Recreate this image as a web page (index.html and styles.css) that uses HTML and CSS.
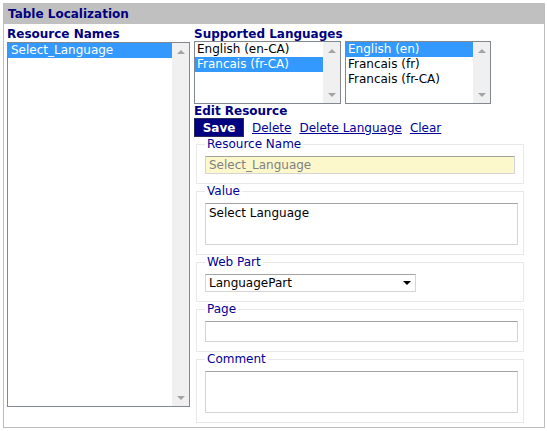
FILE: index.html
```html
<!DOCTYPE html>
<html lang="en">
<head>
  <meta charset="UTF-8" />
  <title>Table Localization</title>
  <link rel="stylesheet" href="styles.css">
</head>
<body>
  <div class="panel">
    <div class="panel-head">Table Localization</div>
    <div class="panel-body">

      <div class="names-col">
        <div class="label names-label">Resource Names</div>
        <div class="listbox names-list">
          <div class="items">
            <div class="item sel">Select_Language</div>
          </div>
          <div class="scroll"><span class="arrow up"></span><span class="arrow down"></span></div>
        </div>
      </div>

      <div class="edit-col">
        <div class="label">Supported Languages</div>
        <div class="lang-lists">
          <div class="listbox lang-list">
            <div class="items">
              <div class="item">English (en-CA)</div>
              <div class="item sel">Francais (fr-CA)</div>
            </div>
            <div class="scroll"><span class="arrow up"></span><span class="arrow down"></span></div>
          </div>
          <div class="listbox lang-list">
            <div class="items">
              <div class="item sel">English (en)</div>
              <div class="item">Francais (fr)</div>
              <div class="item">Francais (fr-CA)</div>
            </div>
            <div class="scroll"><span class="arrow up"></span><span class="arrow down"></span></div>
          </div>
        </div>

        <div class="label">Edit Resource</div>
        <div class="actions">
          <button class="btn-save">Save</button>
          <a href="#">Delete</a>
          <a href="#">Delete Language</a>
          <a href="#">Clear</a>
        </div>

        <fieldset>
          <legend>Resource Name</legend>
          <input class="field field-name" type="text" value="Select_Language" readonly>
        </fieldset>
        <fieldset>
          <legend>Value</legend>
          <textarea class="field field-area">Select Language</textarea>
        </fieldset>
        <fieldset>
          <legend>Web Part</legend>
          <div class="dropdown">LanguagePart<span class="caret"></span></div>
        </fieldset>
        <fieldset>
          <legend>Page</legend>
          <input class="field field-page" type="text">
        </fieldset>
        <fieldset>
          <legend>Comment</legend>
          <textarea class="field field-area"></textarea>
        </fieldset>
      </div>

    </div>
  </div>
</body>
</html>
```

FILE: styles.css
```css
* {
  box-sizing: border-box;
}

body {
  margin: 0;
  padding: 3px;
  font-family: 'DejaVu Sans', Verdana, sans-serif;
  font-size: 12px;
  color: #000;
  background: #fff;
}

.panel {
  width: 542px;
  height: 425px;
  border: 1px solid #bdbdbd;
}

.panel-head {
  height: 20px;
  line-height: 20px;
  padding-left: 4px;
  background: #c0c0c0;
  color: #000080;
  font-weight: bold;
}

.panel-body {
  display: flex;
  gap: 4px;
  padding: 3px 0 0 3px;
}

.label {
  height: 14px;
  line-height: 14px;
  color: #000080;
  font-weight: bold;
}

.names-col {
  width: 183px;
}

.names-label {
  margin-bottom: 1px;
}

/* list boxes */
.listbox {
  display: flex;
  border: 1px solid #828790;
  background: #fff;
}

.items {
  flex: 1;
  overflow: hidden;
}

.item {
  height: 15px;
  line-height: 15px;
  padding-left: 2px;
  white-space: nowrap;
}

.item.sel {
  background: #3399ff;
  color: #fff;
}

.scroll {
  width: 17px;
  display: flex;
  flex-direction: column;
  justify-content: space-between;
  background: #f0f0f0;
}

.arrow {
  display: flex;
  height: 17px;
  align-items: center;
  justify-content: center;
}

.arrow::after {
  content: '';
  border-left: 4px solid transparent;
  border-right: 4px solid transparent;
}

.arrow.up::after {
  border-bottom: 4px solid #a3a3a3;
}

.arrow.down::after {
  border-top: 4px solid #a3a3a3;
}

.names-list {
  height: 365px;
}

.names-list .item {
  padding-left: 3px;
}

.lang-lists {
  display: flex;
  gap: 4px;
}

.lang-list {
  width: 147px;
  height: 63px;
}

.lang-list + .lang-list {
  width: 146px;
}

/* edit area */
.edit-col {
  flex: 1;
}

.actions {
  display: flex;
  align-items: center;
  gap: 8px;
  height: 19px;
}

.btn-save {
  width: 50px;
  height: 19px;
  padding: 0;
  border: 1px solid #2a2a5a;
  background: #000080;
  color: #fff;
  font-family: inherit;
  font-size: 12px;
  font-weight: bold;
}

.actions a {
  color: #000099;
  text-decoration: underline;
}

fieldset {
  width: 328px;
  min-width: 0;
  margin: 0 0 0 2px;
  padding: 4px 5px 9px 8px;
  border: 1px solid #e8e8e8;
}

legend {
  padding: 0 2px;
  height: 15px;
  line-height: 15px;
  color: #000099;
  font-size: 12px;
}

.field {
  display: block;
  margin: 0;
  padding: 2px 3px;
  border: 1px solid #d5d5d5;
  border-top-color: #a3a3a3;
  font-family: inherit;
  font-size: 12px;
  color: #000;
  resize: none;
  outline: none;
}

.field-name {
  width: 310px;
  height: 18px;
  padding: 0 3px;
  background: #fcf8cc;
  color: #808080;
}

.field-area {
  width: 313px;
  height: 42px;
}

.field-page {
  width: 313px;
  height: 21px;
}

.dropdown {
  position: relative;
  width: 211px;
  height: 18px;
  line-height: 16px;
  padding-left: 3px;
  border: 1px solid #d5d5d5;
  border-top-color: #a3a3a3;
}

.caret {
  position: absolute;
  right: 4px;
  top: 6px;
  border-left: 4px solid transparent;
  border-right: 4px solid transparent;
  border-top: 4px solid #000;
}
```
